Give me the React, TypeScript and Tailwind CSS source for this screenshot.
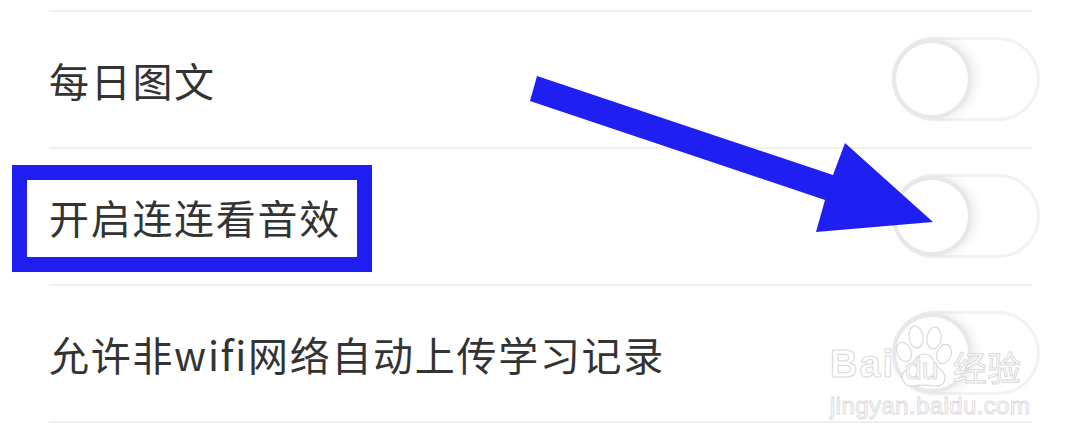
import React from "react";

function Toggle() {
  return (
    <div className="relative -mr-2 mb-[1px] h-[84px] w-[148px] shrink-0 rounded-[42px] border-[3px] border-[#f1f2f3] bg-white blur-[0.7px]">
      <div className="absolute left-[-3px] top-[-1px] h-[80px] w-[80px] rounded-full border-[4px] border-[#e7e8ea] bg-white shadow-[5px_0_8px_rgba(0,0,0,0.07)]" />
    </div>
  );
}

function Row({ label, boxed }: { label: string; boxed?: boolean }) {
  return (
    <div className="relative flex h-[137px] items-center justify-between border-b-2 border-[#f0f0f0]">
      {boxed && (
        <div className="absolute left-[-37px] top-[16px] h-[107px] w-[360px] border-[15px] border-[#1f1ff2]" />
      )}
      <span className="relative text-[40px] leading-[44px] tracking-[1.7px] text-[#333333] font-['Noto_Sans_CJK_SC','Liberation_Sans',sans-serif]">
        {label}
      </span>
      <Toggle />
    </div>
  );
}

function Watermark() {
  const stroke = "text-white [-webkit-text-stroke:1px_#d9d9dc]";
  return (
    <div className="absolute left-[830px] top-[324px] flex w-[195px] flex-col">
      <div className="flex h-[66px] items-center">
        <span className={`mt-[14px] w-[63px] text-[38px] font-bold leading-[44px] tracking-[2px] font-['Liberation_Sans',sans-serif] ${stroke}`}>
          Bai
        </span>
        <div className="relative h-[66px] w-[60px]">
          <svg width="60" height="66" viewBox="0 0 60 66" fill="#ffffff" stroke="#d9d9dc" strokeWidth="1.2">
            <ellipse cx="23" cy="13" rx="7" ry="11" transform="rotate(-8 23 13)" />
            <ellipse cx="41" cy="14" rx="7" ry="11" transform="rotate(8 41 14)" />
            <ellipse cx="11" cy="28" rx="7" ry="10" transform="rotate(-25 11 28)" />
            <ellipse cx="51" cy="30" rx="7" ry="10" transform="rotate(20 51 30)" />
            <path d="M31 30C22 30 22 40 14 45C5 51 10 63 20 62C26 61 36 61 42 62C52 63 56 52 47 45C40 40 40 30 31 30Z" />
          </svg>
          <span className={`absolute bottom-[3px] left-[12px] text-[30px] leading-[36px] font-['Liberation_Sans',sans-serif] ${stroke}`}>
            du
          </span>
        </div>
        <span className={`mt-[20px] text-[34px] leading-[40px] font-['Noto_Sans_CJK_SC',sans-serif] ${stroke}`}>
          经验
        </span>
      </div>
      <span className="mt-[2px] whitespace-nowrap text-[24px] leading-[28px] tracking-[0.4px] text-white [-webkit-text-stroke:1px_#dcdcdf] font-['Liberation_Sans',sans-serif]">
        jingyan.baidu.com
      </span>
    </div>
  );
}

export default function App() {
  return (
    <div className="relative h-[440px] w-[1080px] overflow-hidden bg-white">
      <div className="ml-[49px] mr-[48px] mt-[10px] border-t-2 border-[#f0f0f0]">
        <Row label="每日图文" />
        <Row label="开启连连看音效" boxed />
        <Row label="允许非wifi网络自动上传学习记录" />
      </div>
      <svg className="absolute left-0 top-0" width="1080" height="440" viewBox="0 0 1080 440">
        <polygon points="537,76 530,101 825,200 816,232 933,222 845,143 833,175" fill="#1f1ff2" />
      </svg>
      <Watermark />
    </div>
  );
}
